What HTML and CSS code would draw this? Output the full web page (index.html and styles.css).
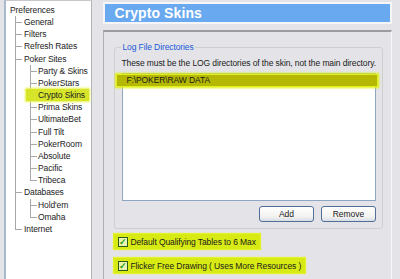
FILE: index.html
```html
<!DOCTYPE html>
<html lang="en">
<head>
  <meta charset="UTF-8">
  <meta name="viewport" content="width=device-width, initial-scale=1.0">
  <title>Preferences - Crypto Skins</title>
  <link rel="stylesheet" href="styles.css">
</head>
<body>
  <div class="app">
    <nav class="tree">
      <div class="tree-root">Preferences</div>
      <ul class="level1">
        <li><span>General</span></li>
        <li><span>Filters</span></li>
        <li><span>Refresh Rates</span></li>
        <li><span>Poker Sites</span>
          <ul class="level2">
            <li><span>Party &amp; Skins</span></li>
            <li><span>PokerStars</span></li>
            <li class="selected"><span>Crypto Skins</span></li>
            <li><span>Prima Skins</span></li>
            <li><span>UltimateBet</span></li>
            <li><span>Full Tilt</span></li>
            <li><span>PokerRoom</span></li>
            <li><span>Absolute</span></li>
            <li><span>Pacific</span></li>
            <li><span>Tribeca</span></li>
          </ul>
        </li>
        <li><span>Databases</span>
          <ul class="level2">
            <li><span>Hold'em</span></li>
            <li><span>Omaha</span></li>
          </ul>
        </li>
        <li><span>Internet</span></li>
      </ul>
    </nav>

    <main class="page">
      <div class="title-bar">
        <h1>Crypto Skins</h1>
      </div>
      <section class="panel">
        <fieldset class="group">
          <legend>Log File Directories</legend>
          <p class="hint">These must be the LOG directories of the skin, not the main directory.</p>
          <div class="listbox">
            <div class="list-item selected">F:\POKER\RAW DATA</div>
          </div>
          <div class="buttons">
            <button type="button" class="btn btn-add">Add</button>
            <button type="button" class="btn btn-remove">Remove</button>
          </div>
        </fieldset>

        <label class="check check-1"><span class="box">&#10003;</span>Default Qualifying Tables to 6 Max</label>
        <label class="check check-2"><span class="box">&#10003;</span>Flicker Free Drawing ( Uses More Resources )</label>
      </section>
    </main>
  </div>
</body>
</html>
```

FILE: styles.css
```css
/* General Styles */
body {
  margin: 0;
  padding: 0;
  background-color: #e4e4e8;
  font-family: "Liberation Sans", Arial, sans-serif;
  font-size: 8.5px;
  letter-spacing: -0.1px;
  color: #1a1a1a;
  overflow: hidden;
}

.app {
  display: flex;
  height: 279px;
}

/* Tree */
.tree {
  margin-left: 4px;
  width: 84px;
  padding: 3px 0 0 4px;
  background-color: #fff;
  border-left: 2px solid #a9b9cc;
  border-right: 1px solid #b4b4b8;
  border-top: 1px solid #c8c8cc;
  line-height: 12.15px;
  color: #222;
}

.tree ul {
  list-style: none;
  margin: 0;
  padding: 0;
}

.tree .level1 {
  margin-left: 5px;
}

.level1 > li {
  position: relative;
  padding-left: 9px;
}

.tree .level2 {
  margin-left: 6px;
}

.level2 > li {
  position: relative;
  padding-left: 8px;
}

.tree li::before {
  content: "";
  position: absolute;
  left: 0;
  top: 6px;
  width: 7px;
  border-top: 1px solid #a8a8a8;
}

.tree li::after {
  content: "";
  position: absolute;
  left: 0;
  top: 0;
  bottom: 0;
  border-left: 1px solid #a8a8a8;
}

.tree li:last-child::after {
  bottom: auto;
  height: 6px;
}

.tree li.selected > span {
  display: inline-block;
  margin-left: -12px;
  padding: 0 4px 0 12px;
  background-color: #d6e52a;
  box-shadow: 0 0 2px 1px #e8f44c;
  position: relative;
  z-index: 1;
}

/* Right page */
.page {
  flex: 1;
  margin-left: 11px;
  margin-right: 8px;
  display: flex;
  flex-direction: column;
}

.title-bar {
  margin-top: 2px;
  border: 2px solid #f6f6f8;
  background-color: #69a9ef;
  height: 18px;
  display: flex;
  align-items: center;
}

.title-bar h1 {
  margin: 0 0 0 9px;
  font-size: 14px;
  font-weight: bold;
  color: #fff;
  letter-spacing: 0.1px;
}

.panel {
  margin-top: 6px;
  flex: 1;
  border-top: 2px solid #9c9ca0;
  border-left: 1px solid #b0b0b4;
  border-right: 1px solid #f8f8fa;
  padding: 10px 8px 0 10px;
}

.group {
  margin: 0;
  padding: 0 6px 6px 6px;
  border: 1px solid #cfcfcf;
  border-radius: 3px;
}

.group legend {
  padding: 0 1px;
  margin-left: 0;
  color: #2058d8;
}

.hint {
  margin: 6px 0 5px 0;
  white-space: nowrap;
}

.listbox {
  margin-left: 1px;
  height: 125px;
  background-color: #fff;
  border: 1px solid #8ea6c2;
  padding-top: 1px;
}

.list-item {
  height: 11px;
  line-height: 11px;
  background-color: #b5b800;
  box-shadow: 0 0 2px 2px #dfee10;
  margin-left: -6px;
  margin-right: -2px;
  padding-left: 9px;
}

.buttons {
  display: flex;
  justify-content: flex-end;
  gap: 7px;
  margin-top: 5px;
}

.btn {
  width: 55px;
  height: 16px;
  padding: 0;
  font-family: "Liberation Sans", Arial, sans-serif;
  font-size: 8.5px;
  color: #1a1a1a;
  border: 1px solid #4f6f98;
  border-radius: 3px;
  background: linear-gradient(#ffffff, #f2f2f0 70%, #d8dce4);
}

.check {
  display: flex;
  align-items: center;
  width: max-content;
  height: 15px;
  padding: 0 4px;
  background-color: #d8ea14;
  box-shadow: 0 0 1px 1px #e4f230;
}

.check-1 {
  margin-top: 5px;
}

.check-2 {
  margin-top: 9px;
}

.box {
  width: 8px;
  height: 8px;
  margin-right: 2px;
  border: 1px solid #2e5a18;
  background-color: #e8f4b0;
  color: #2a9a10;
  font-size: 9px;
  font-weight: bold;
  line-height: 8px;
  text-align: center;
}
```
